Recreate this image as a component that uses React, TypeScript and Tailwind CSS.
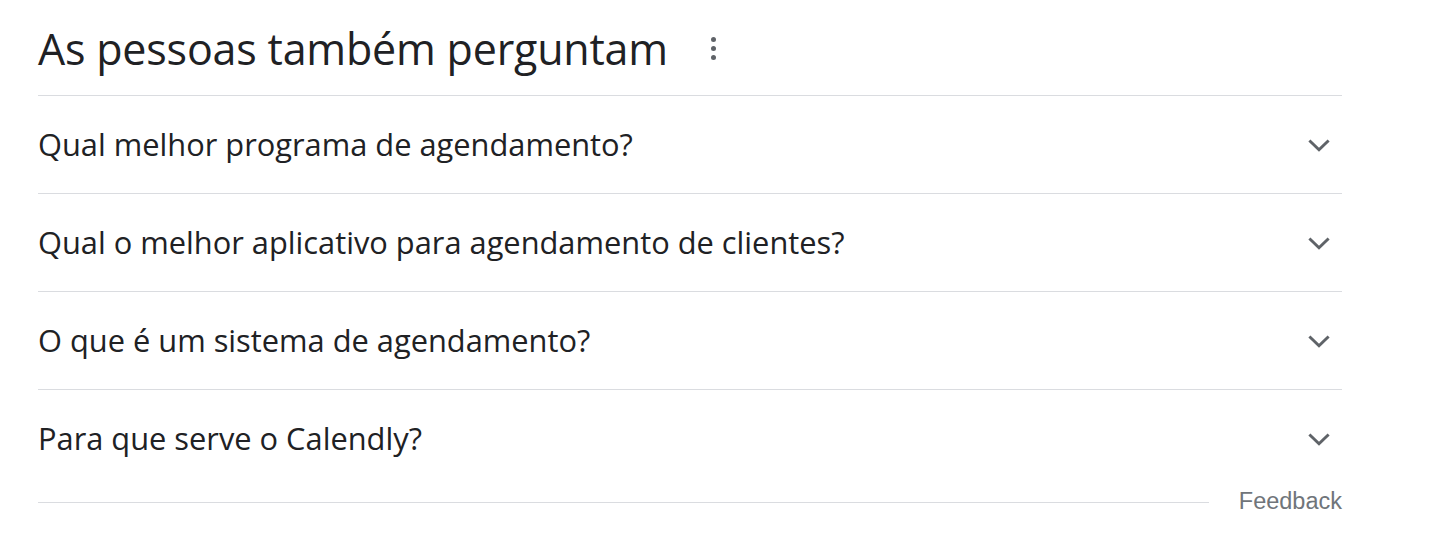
import React from "react";

const questions = [
  "Qual melhor programa de agendamento?",
  "Qual o melhor aplicativo para agendamento de clientes?",
  "O que é um sistema de agendamento?",
  "Para que serve o Calendly?",
];

function Chevron() {
  return (
    <svg width="32" height="32" viewBox="0 0 24 24" className="text-[#5f6368]">
      <path d="M4.8 8.6 12 15.6l7.2-7" fill="none" stroke="currentColor" strokeWidth="2.2" />
    </svg>
  );
}

export default function App() {
  return (
    <div className="w-[1432px] h-[536px] bg-white font-['Open_Sans',sans-serif] text-[#202124]">
      <div className="ml-[38px] w-[1304px]">
        <div className="h-[95px] flex items-center pt-[2px]">
          <h2 className="text-[43px] leading-none font-normal tracking-[-0.2px]">As pessoas também perguntam</h2>
          <div className="ml-[43px] flex flex-col gap-[4px] items-center">
            <span className="w-[5px] h-[5px] rounded-full bg-[#5f6368]" />
            <span className="w-[5px] h-[5px] rounded-full bg-[#5f6368]" />
            <span className="w-[5px] h-[5px] rounded-full bg-[#5f6368]" />
          </div>
        </div>
        {questions.map((q) => (
          <div key={q} className="h-[98px] border-t border-[#dadce0] flex items-center justify-between">
            <span className="text-[30.8px]">{q}</span>
            <span className="mr-[7px] flex"><Chevron /></span>
          </div>
        ))}
        <div className="flex items-center h-[30px]">
          <div className="flex-1 h-px bg-[#dadce0]" />
          <span className="ml-[30px] text-[23.5px] leading-none text-[#70757a] font-['Liberation_Sans',sans-serif]">Feedback</span>
        </div>
      </div>
    </div>
  );
}
